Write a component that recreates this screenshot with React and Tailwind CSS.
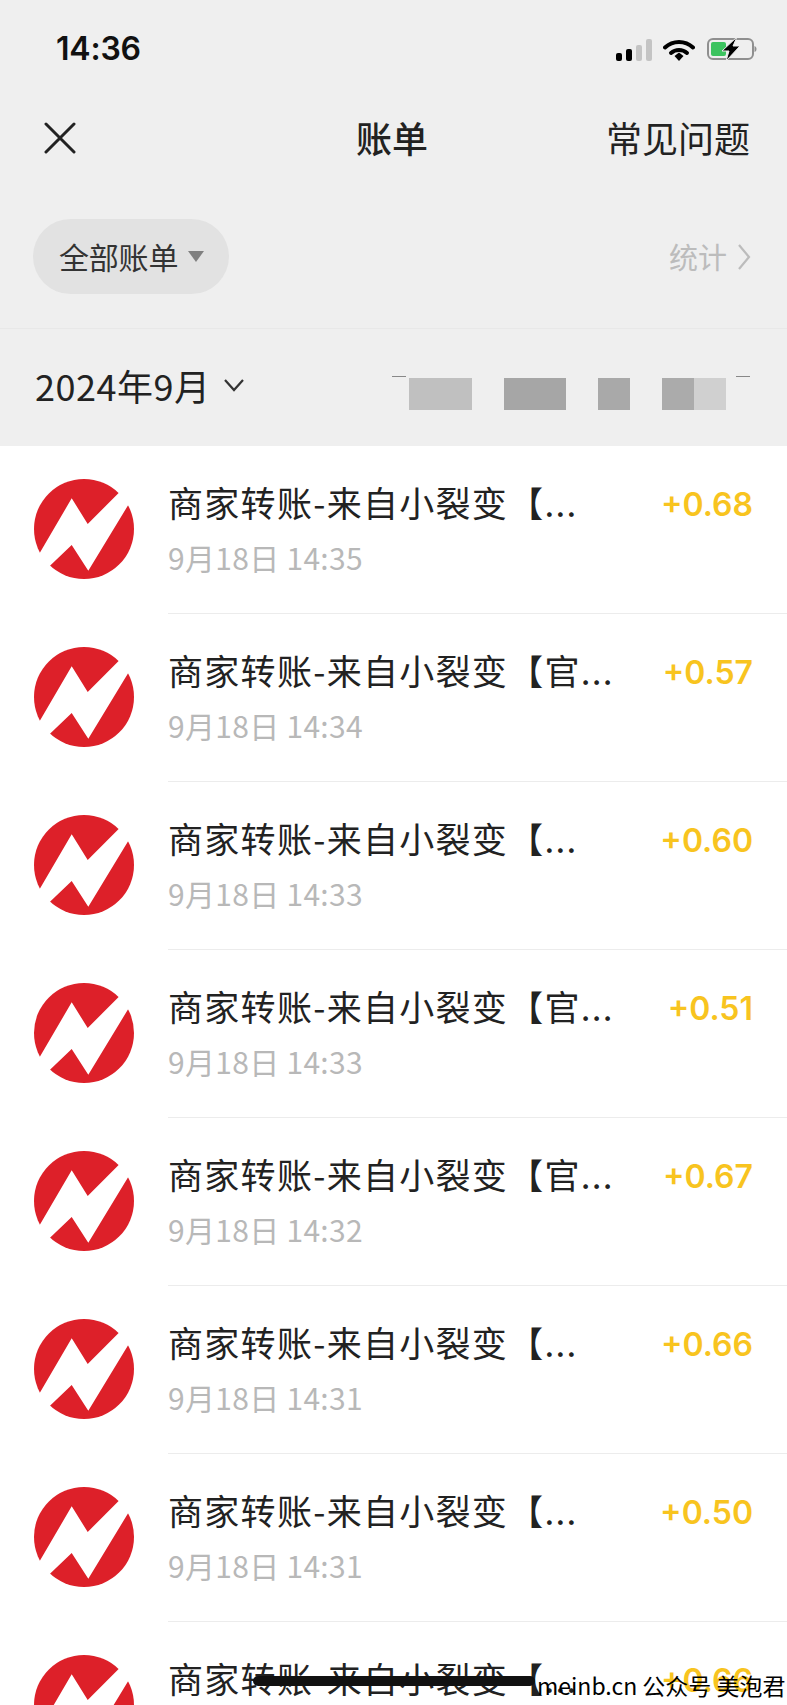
import React from "react";

const CJK = "font-['Noto_Sans_CJK_SC','Noto_Sans',sans-serif]";

const rows = [
  { title: "商家转账-来自小裂变【...", time: "9月18日 14:35", amount: "+0.68" },
  { title: "商家转账-来自小裂变【官...", time: "9月18日 14:34", amount: "+0.57" },
  { title: "商家转账-来自小裂变【...", time: "9月18日 14:33", amount: "+0.60" },
  { title: "商家转账-来自小裂变【官...", time: "9月18日 14:33", amount: "+0.51" },
  { title: "商家转账-来自小裂变【官...", time: "9月18日 14:32", amount: "+0.67" },
  { title: "商家转账-来自小裂变【...", time: "9月18日 14:31", amount: "+0.66" },
  { title: "商家转账-来自小裂变【...", time: "9月18日 14:31", amount: "+0.50" },
  { title: "商家转账-来自小裂变【...", time: "9月18日 14:30", amount: "+0.66" },
];

function Logo() {
  return (
    <svg width="100" height="100" viewBox="0 0 100 100" className="shrink-0 mb-[2px]">
      <circle cx="50" cy="50" r="50" fill="#dd2029" />
      <polygon
        points="37.7,19.3 53.7,45 100,-1.4 107,5 54.3,91.7 37.7,66 0,102 -6,94"
        fill="#ffffff"
      />
    </svg>
  );
}

function StatusIcons() {
  return (
    <div className="flex items-end gap-[9px]">
      <div className="flex items-end gap-[4px] h-[22px]">
        <div className="w-[6px] h-[8px] rounded-[2px] bg-black" />
        <div className="w-[6px] h-[12px] rounded-[2px] bg-black" />
        <div className="w-[6px] h-[16px] rounded-[2px] bg-[#c4c4c4]" />
        <div className="w-[6px] h-[22px] rounded-[2px] bg-[#c4c4c4]" />
      </div>
      <svg width="32" height="22" viewBox="0 0 32 22" className="ml-[2px]">
        <path d="M2 8.500C10 1 22 1 30 8.500" fill="none" stroke="#000" strokeWidth="4" strokeLinecap="round" />
        <path d="M8 14C12.500 10 19.500 10 24 14" fill="none" stroke="#000" strokeWidth="4" strokeLinecap="round" />
        <path d="M11.500 17L16 13.500 20.500 17 16 22Z" fill="#000" />
      </svg>
      <svg width="50" height="24" viewBox="0 0 50 24" className="ml-[3px]">
        <rect x="1" y="2" width="45" height="20" rx="5" fill="none" stroke="#8f8f8f" strokeWidth="2" />
        <rect x="4" y="5" width="15" height="14" rx="2" fill="#3cc35f" />
        <path d="M47.500 9v6c1.300-.5 2-1.500 2-3s-.7-2.500-2-3Z" fill="#8f8f8f" />
        <path d="M30 0 15 14h7l-3 10 14-15h-7Z" fill="#000" stroke="#eeeeee" strokeWidth="1" />
      </svg>
    </div>
  );
}

function Row({ row }) {
  return (
    <div className="flex items-center h-[168px] pl-[34px]">
      <Logo />
      <div className="flex-1 h-full ml-[34px] pr-[34px] border-b border-[#ececec] flex justify-between">
        <div className="pt-[31px]">
          <div className={`${CJK} text-[35px] leading-[50px] text-[#222222] tracking-[1.3px]`}>{row.title}</div>
          <div className={`${CJK} text-[30px] leading-[40px] mt-[10px] text-[#b8b8b8] tracking-[0.3px]`}>{row.time}</div>
        </div>
        <div className="pt-[34px] font-['Inter',sans-serif] font-semibold text-[32px] leading-[50px] text-[#f8c41f]">
          {row.amount}
        </div>
      </div>
    </div>
  );
}

export default function App() {
  return (
    <div className="relative w-[787px] h-[1705px] overflow-hidden bg-white">
      <div className="bg-[#efefef]">
        <div className="flex justify-between items-center h-[96px] pt-[2px] pl-[56px] pr-[30px]">
          <span className="font-['Inter',sans-serif] font-semibold text-[32px] tracking-[-0.2px] text-[#111111]">14:36</span>
          <StatusIcons />
        </div>

        <div className="relative flex items-center justify-between h-[84px] pl-[44px] pr-[37px]">
          <svg width="32" height="32" viewBox="0 0 32 32">
            <path d="M2 2 30 30M30 2 2 30" stroke="#222" strokeWidth="3" strokeLinecap="round" />
          </svg>
          <span className={`${CJK} absolute left-[356px] top-[19px] text-[36px] leading-[44px] font-medium text-[#222222]`}>账单</span>
          <span className={`${CJK} text-[36px] leading-[44px] mb-[2px] text-[#222222]`}>常见问题</span>
        </div>

        <div className="flex items-start justify-between h-[149px] pt-[39px] pl-[33px] pr-[36px] border-b border-[#e8e8e8]">
          <div className="flex items-center w-[196px] h-[75px] pl-[26px] pb-[1px] rounded-full bg-[#e2e2e2]">
            <span className={`${CJK} text-[30px] tracking-[-0.2px] text-[#333333]`}>全部账单</span>
            <div className="ml-[10px] w-0 h-0 border-x-[8px] border-x-transparent border-t-[11px] border-t-[#808080]" />
          </div>
          <div className="flex items-center h-[75px]">
            <span className={`${CJK} text-[29px] text-[#bcbcbc]`}>统计</span>
            <svg width="14" height="28" viewBox="0 0 14 28" className="ml-[10px]">
              <path d="M2 2 12 14 2 26" fill="none" stroke="#bcbcbc" strokeWidth="2.200" />
            </svg>
          </div>
        </div>

        <div className="flex items-center justify-between h-[117px] pl-[35px] pr-[61px]">
          <div className="flex items-center mb-[6px]">
            <span className={`${CJK} text-[36px] tracking-[0.5px] text-[#222222]`}>2024年9月</span>
            <svg width="22" height="14" viewBox="0 0 22 14" className="ml-[13px]">
              <path d="M2 2 11 12 20 2" fill="none" stroke="#333" strokeWidth="2.200" />
            </svg>
          </div>
          {/* blurred-out summary */}
          <div className="relative flex h-[32px] mt-[12px] blur-[0.5px]">
            <div className="absolute -left-[17px] -top-[2px] w-[14px] h-[1px] bg-[#888888]" />
            <div className="w-[63px] bg-[#c0c0c0]" />
            <div className="w-[62px] ml-[32px] bg-[#a6a6a6]" />
            <div className="w-[32px] ml-[32px] bg-[#a9a9a9]" />
            <div className="w-[32px] ml-[32px] bg-[#ababab]" />
            <div className="w-[32px] bg-[#d0d0d0]" />
            <div className="absolute -right-[24px] -top-[2px] w-[14px] h-[1px] bg-[#888888]" />
          </div>
        </div>
      </div>

      <div>
        {rows.map((row, i) => (
          <Row key={i} row={row} />
        ))}
      </div>

      {/* home indicator + watermark sit over the list */}
      <div className="absolute left-[253px] top-[1676px] w-[282px] h-[10px] rounded-full bg-[#111111]" />
      <div className={`${CJK} absolute left-[537px] top-[1667px] whitespace-nowrap text-[23px] leading-[36px] text-black`}>
        meinb.cn 公众号 美泡君
      </div>
    </div>
  );
}
